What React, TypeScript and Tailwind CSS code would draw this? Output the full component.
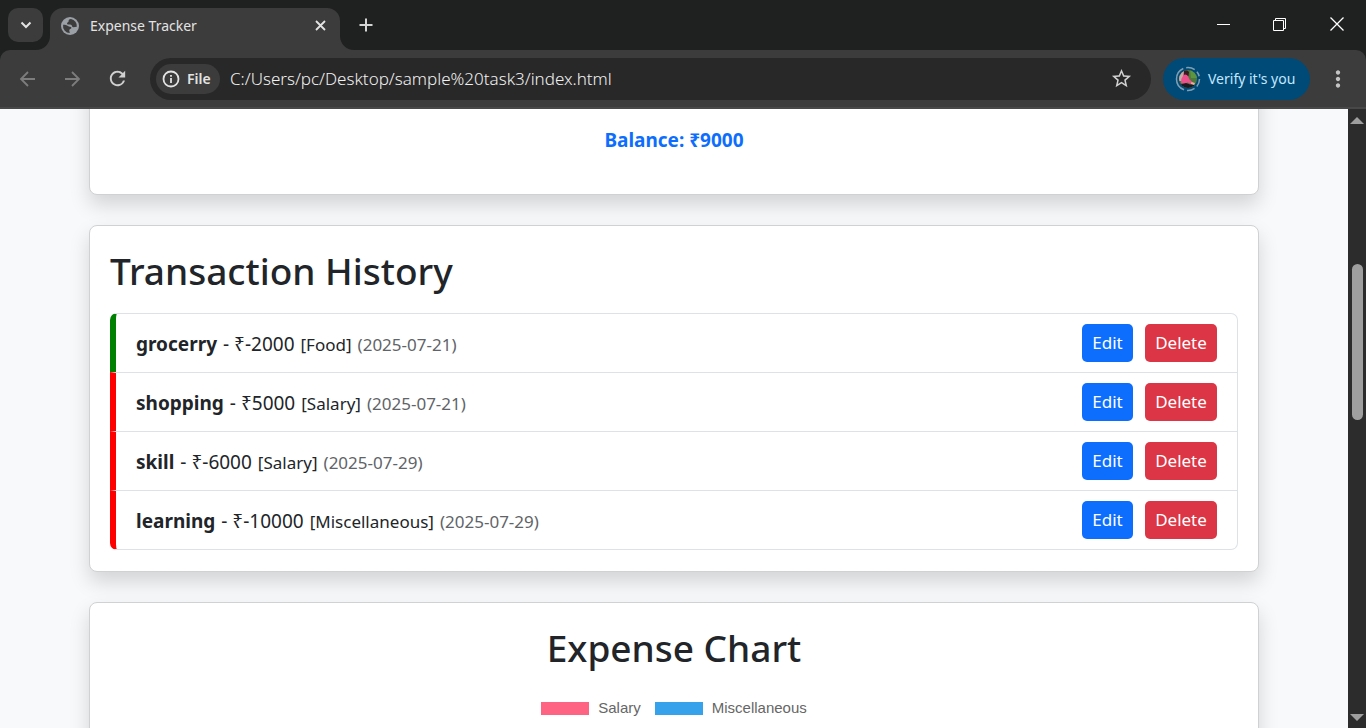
import React from "react";
import { MdStarOutline, MdRefresh, MdMoreVert } from "react-icons/md";

type Transaction = {
  name: string;
  amount: number;
  category: string;
  date: string;
  accent: string;
};

const transactions: Transaction[] = [
  { name: "grocerry", amount: -2000, category: "Food", date: "2025-07-21", accent: "border-l-[#008000]" },
  { name: "shopping", amount: 5000, category: "Salary", date: "2025-07-21", accent: "border-l-[#ff0000]" },
  { name: "skill", amount: -6000, category: "Salary", date: "2025-07-29", accent: "border-l-[#ff0000]" },
  { name: "learning", amount: -10000, category: "Miscellaneous", date: "2025-07-29", accent: "border-l-[#ff0000]" },
];

function TabStrip() {
  return (
    <header className="flex h-[50px] shrink-0 items-stretch bg-[#1f2120]">
      <button
        type="button"
        aria-label="Search tabs"
        className="mt-2 ml-2 flex h-[34px] w-[35px] items-center justify-center rounded-[10px] bg-[#3c3c3c]"
      >
        <svg width="12" height="8" viewBox="0 0 12 8" fill="none" stroke="#e3e3e3" strokeWidth="2">
          <path d="M1.5 1.5 6 6l4.500-4.500" />
        </svg>
      </button>
      <div className="relative mt-2 ml-[7px] flex w-[290px] items-center rounded-t-[13px] bg-[#3c3c3c] pr-3 pb-[7px] pl-[10px]">
        <svg className="absolute bottom-0 -left-[14px]" width="14" height="14" viewBox="0 0 14 14" fill="#3c3c3c">
          <path d="M14 0v14H0A14 14 0 0 0 14 0Z" />
        </svg>
        <svg className="absolute -right-[14px] bottom-0" width="14" height="14" viewBox="0 0 14 14" fill="#3c3c3c">
          <path d="M0 0v14h14A14 14 0 0 1 0 0Z" />
        </svg>
        <svg width="20" height="20" viewBox="0 0 20 20">
          <circle cx="10" cy="10" r="9" fill="#9aa0a6" />
          <g fill="#3c3c3c">
            <path d="M11 3c-2 .2-2.500 1.200-2.400 2.200.3 1-1.600 1-1.600 2.200 0 1 1.500 1.300 3 1.200 1.600 0 2 1.100 2.200 2.100.7.800 2.400.3 4.600.1A7 7 0 0 0 11 3Z" />
            <path d="M3.100 8.800c1.900 0 3.800.2 4.900 1.300 1 1 2.900.4 3.400 1.500.5 1.200-1.700 1.300-2.100 2.500-.2.900.5 2 .5 2.900A7 7 0 0 1 3.100 8.800Z" />
          </g>
        </svg>
        <span className="ml-[10px] flex-1 text-[14px] text-[#e3e3e3]">Expense Tracker</span>
        <button type="button" aria-label="Close tab" className="flex size-4 items-center justify-center">
          <svg width="11" height="11" viewBox="0 0 11 11" stroke="#e3e3e3" strokeWidth="1.800">
            <path d="m1 1 9 9M10 1l-9 9" />
          </svg>
        </button>
      </div>
      <button type="button" aria-label="New tab" className="ml-[18px] flex w-4 items-center justify-center">
        <svg width="14" height="14" viewBox="0 0 14 14" stroke="#d5d5d5" strokeWidth="2">
          <path d="M7 .5v13M.5 7h13" />
        </svg>
      </button>
      <div className="ml-auto flex">
        <button type="button" aria-label="Minimize" className="flex w-14 items-center justify-center pb-[2px]">
          <svg width="13" height="1" viewBox="0 0 13 1" fill="#fff">
            <path d="M0 0h13v1H0z" />
          </svg>
        </button>
        <button type="button" aria-label="Restore" className="flex w-14 items-center justify-center pb-[2px]">
          <svg width="13" height="13" viewBox="0 0 13 13" fill="none" stroke="#fff">
            <path d="M.5 2.500h10v10H.5zM2.500 2.500v-2h10v10h-2" />
          </svg>
        </button>
        <button type="button" aria-label="Close window" className="flex w-[59px] items-center justify-center pb-[2px]">
          <svg width="14" height="14" viewBox="0 0 14 14" stroke="#fff" strokeWidth="1.300">
            <path d="m.5.5 13 13M13.500.5l-13 13" />
          </svg>
        </button>
      </div>
    </header>
  );
}

function Toolbar() {
  return (
    <div className="shrink-0 bg-[#1f2120]">
      <nav className="flex h-[59px] items-center rounded-t-[10px] border-b-2 border-[#484848] bg-[#3c3c3c] pl-[19px]">
        <button type="button" aria-label="Back">
          <svg width="18" height="18" viewBox="0 0 18 18" fill="none" stroke="#7d7d7d" strokeWidth="1.800">
            <path d="M16 9H2M9 2 2 9l7 7" />
          </svg>
        </button>
        <button type="button" aria-label="Forward" className="ml-[26px]">
          <svg width="18" height="18" viewBox="0 0 18 18" fill="none" stroke="#7d7d7d" strokeWidth="1.800">
            <path d="M2 9h14M9 2l7 7-7 7" />
          </svg>
        </button>
        <button type="button" aria-label="Reload" className="ml-[25px]">
          <MdRefresh className="size-[23px] text-[#d0d0d0]" />
        </button>
        <div className="ml-[21px] flex h-[42px] flex-1 items-center rounded-full bg-[#282828] pr-[18px] pl-[6px]">
          <button type="button" className="flex h-[30px] w-16 shrink-0 items-center rounded-full bg-[#3c3c3c] pl-[6px] text-[14px] font-semibold text-[#e3e3e3]">
            <svg className="mr-[7px]" width="18" height="18" viewBox="0 0 18 18" fill="none" stroke="#e3e3e3" strokeWidth="1.800">
              <circle cx="9" cy="9" r="7.500" />
              <path d="M9 8v5M9 5v1.800" />
            </svg>
            File
          </button>
          <input
            aria-label="Address"
            defaultValue="C:/Users/pc/Desktop/sample%20task3/index.html"
            className="ml-[10px] min-w-0 flex-1 bg-transparent text-[17px] font-light text-[#f1f1f1] outline-none"
          />
          <button type="button" aria-label="Bookmark">
            <MdStarOutline className="size-[23px] text-[#d0d0d0]" />
          </button>
        </div>
        <button type="button" className="ml-3 flex h-[42px] w-[147px] items-center rounded-full bg-[#004a77] pl-3 text-[14px] text-[#c2e7ff]">
          <svg className="mr-[7px]" width="26" height="26" viewBox="0 0 26 26">
            <defs>
              <clipPath id="avatar">
                <circle cx="13" cy="13" r="9" />
              </clipPath>
            </defs>
            <circle cx="13" cy="13" r="11.500" fill="none" stroke="#7f9fb5" strokeWidth="1.500" strokeDasharray="8 3 8 3 27 3 9 3 5 3" />
            <g clipPath="url(#avatar)">
              <path d="M0 0h26v26H0z" fill="#4d7a3c" />
              <path d="M15 3h9v9h-8z" fill="#5d9440" />
              <path d="M3 3h6v12H3z" fill="#c9a9a4" />
              <path d="M9 5q3-2 5 1l-.5 4-3 2-2-1z" fill="#3a1a20" />
              <path d="M8.500 9q2.500-1.500 4.500 1l1.500 3.500 4 3.500-1.500 1.500-4.500-2-2.500 1.500-4-1q0-5 2.500-8z" fill="#ec4f8c" />
              <path d="M5 18.500l6-1.500 4 1.500 4-.5v5H6z" fill="#1b1a22" />
              <path d="m16.500 16 3.500 1-1 2-3-1z" fill="#e8b59a" />
            </g>
          </svg>
          Verify it's you
        </button>
        <button type="button" aria-label="Menu" className="mr-[15px] ml-[15px]">
          <MdMoreVert className="size-[26px] text-[#c4c4c4]" />
        </button>
      </nav>
    </div>
  );
}

function Card({ className, children }: { className: string; children: React.ReactNode }) {
  return (
    <section className={`border border-[#d0d1d2] bg-white px-5 shadow-[0_10px_20px_rgba(0,0,0,0.15)] ${className}`}>
      {children}
    </section>
  );
}

function TransactionRow({ item }: { item: Transaction }) {
  return (
    <li
      className={`flex items-center justify-between border-t border-r border-l-[6px] border-t-[#dee2e6] border-r-[#dee2e6] py-[10px] pr-5 pl-5 first:rounded-t-[7px] last:rounded-b-[7px] last:border-b last:border-b-[#dee2e6] ${item.accent}`}
    >
      <p className="flex items-baseline gap-[6px] pt-[2px] text-[19px] leading-[28px]">
        <strong className="font-bold">{item.name}</strong>
        <span>- ₹{item.amount}</span>
        <span className="text-[17px]">[{item.category}]</span>
        <span className="text-[17px] text-[#5f6468]">({item.date})</span>
      </p>
      <div className="flex gap-3 text-[17px] leading-[28px] text-white">
        <button type="button" className="h-[38px] w-[51px] rounded-[5px] bg-[#0d6efd]">Edit</button>
        <button type="button" className="h-[38px] w-[72px] rounded-[5px] bg-[#dc3545]">Delete</button>
      </div>
    </li>
  );
}

function Scrollbar() {
  return (
    <div aria-hidden="true" className="flex w-[18px] shrink-0 flex-col items-center bg-[#2c2c2c] pt-2 pb-[7px]">
      <svg width="14" height="7" viewBox="0 0 14 7" fill="#9f9f9f">
        <path d="M0 7 7 0l7 7z" />
      </svg>
      <div className="mt-[140px] h-[156px] w-[11px] rounded-full bg-[#9f9f9f]" />
      <svg className="mt-auto" width="14" height="7" viewBox="0 0 14 7" fill="#9f9f9f">
        <path d="M0 0l7 7 7-7z" />
      </svg>
    </div>
  );
}

export default function App() {
  return (
    <div className="flex h-screen flex-col overflow-hidden font-['Noto_Sans',sans-serif]">
      <TabStrip />
      <Toolbar />
      <div className="flex min-h-0 flex-1">
        <main className="min-w-0 flex-1 overflow-hidden bg-[#f8f9fa] text-[#212529]">
          <div className="mx-auto flex w-full max-w-[1170px] flex-col gap-[30px]">
            <Card className="-mt-10 rounded-b-[8px] pt-14 pb-[39px] text-center">
              <h4 className="text-[19px] leading-[29px] font-bold text-[#0d6efd]">Balance: ₹9000</h4>
            </Card>
            <Card className="rounded-[8px] pt-5 pb-[21px]">
              <h2 className="mb-[17px] text-[37px] leading-[50px] font-medium">Transaction History</h2>
              <ul>
                {transactions.map((item) => (
                  <TransactionRow key={item.name} item={item} />
                ))}
              </ul>
            </Card>
            <Card className="rounded-[8px] pt-5 pb-5 text-center">
              <h2 className="text-[37px] leading-[50px] font-medium">Expense Chart</h2>
              <ul className="mt-[25px] flex h-[400px] justify-center gap-[14px] font-['Liberation_Sans',sans-serif] text-[15px] leading-5 text-[#666666]">
                <li className="flex h-5 items-center">
                  <span className="mr-[9px] h-[13px] w-12 bg-[#ff6384]" />
                  Salary
                </li>
                <li className="flex h-5 items-center">
                  <span className="mr-[9px] h-[13px] w-12 bg-[#36a2eb]" />
                  Miscellaneous
                </li>
              </ul>
            </Card>
          </div>
        </main>
        <Scrollbar />
      </div>
    </div>
  );
}
